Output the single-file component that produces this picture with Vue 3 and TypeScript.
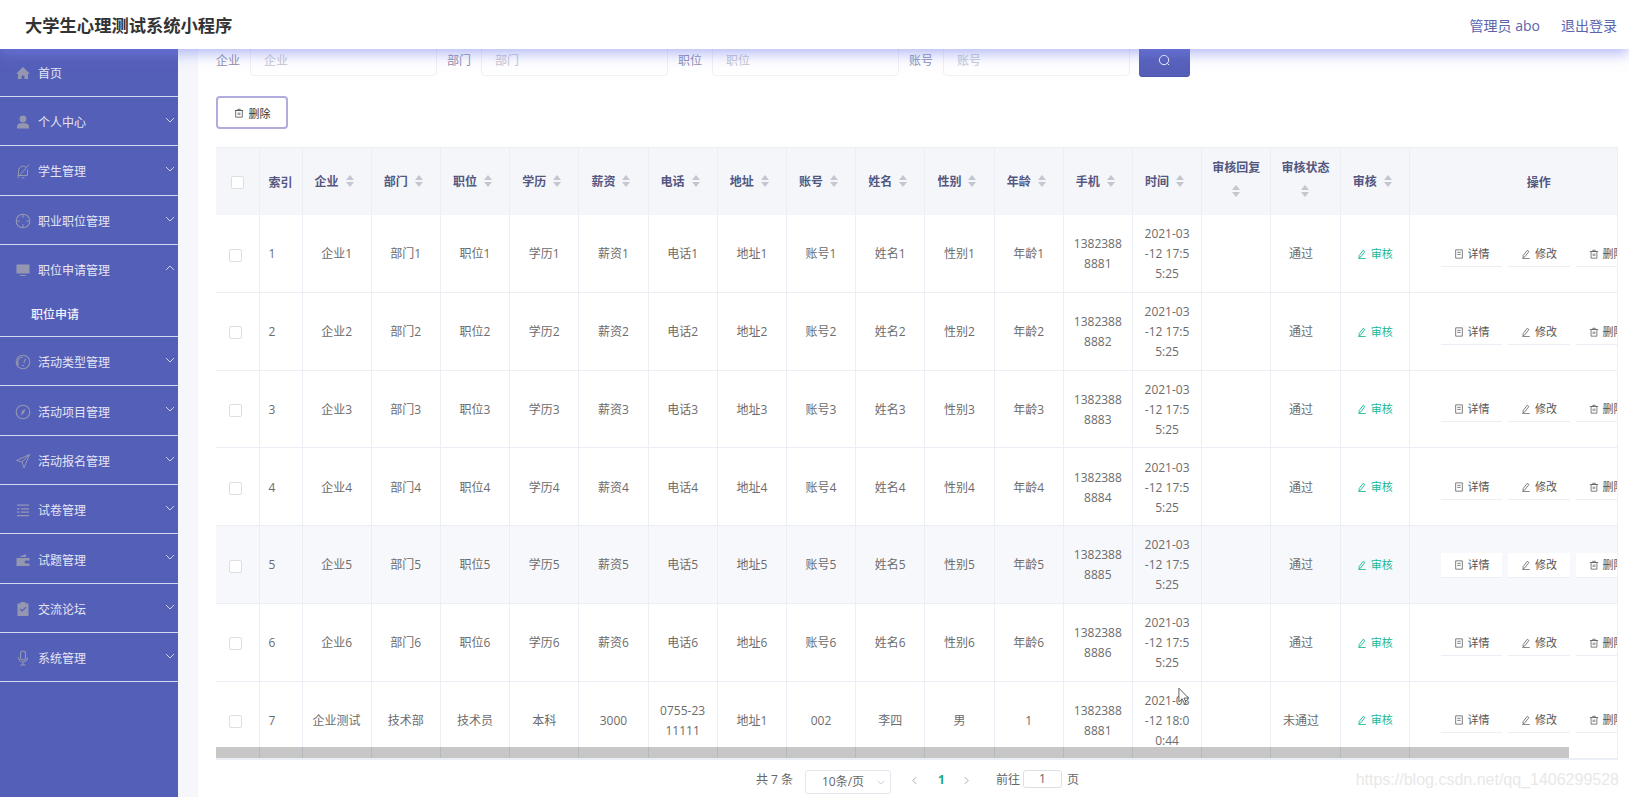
<script setup lang="ts">
interface MenuItem { name: string; icon: string; open?: boolean; sub?: string[] }
const menu: MenuItem[] = [
  { name: '首页', icon: 'home' },
  { name: '个人中心', icon: 'user' },
  { name: '学生管理', icon: 'bell' },
  { name: '职业职位管理', icon: 'aim' },
  { name: '职位申请管理', icon: 'monitor', open: true, sub: ['职位申请'] },
  { name: '活动类型管理', icon: 'odometer' },
  { name: '活动项目管理', icon: 'compass' },
  { name: '活动报名管理', icon: 'send' },
  { name: '试卷管理', icon: 'list' },
  { name: '试题管理', icon: 'wallet' },
  { name: '交流论坛', icon: 'claim' },
  { name: '系统管理', icon: 'mic' }
]
const headers: { t: string; two?: boolean }[] = [
  { t: '企业' }, { t: '部门' }, { t: '职位' }, { t: '学历' }, { t: '薪资' }, { t: '电话' }, { t: '地址' },
  { t: '账号' }, { t: '姓名' }, { t: '性别' }, { t: '年龄' }, { t: '手机' }, { t: '时间' },
  { t: '审核回复', two: true }, { t: '审核状态', two: true }, { t: '审核' }
]
const searchFields = ['企业', '部门', '职位', '账号']
interface Row { id: number; cells: string[][]; state: string; hover?: boolean }
const base = ['企业', '部门', '职位', '学历', '薪资', '电话', '地址', '账号', '姓名', '性别', '年龄']
const rows: Row[] = [1, 2, 3, 4, 5, 6].map((i) => ({
  id: i,
  hover: i === 5,
  state: '通过',
  cells: [...base.map((b) => [b + i]), ['1382388', '888' + i], ['2021-03', '-12 17:5', '5:25']]
}))
rows.push({
  id: 7,
  state: '未通过',
  cells: [['企业测试'], ['技术部'], ['技术员'], ['本科'], ['3000'], ['0755-23', '11111'], ['地址1'], ['002'], ['李四'], ['男'], ['1'], ['1382388', '8881'], ['2021-03', '-12 18:0', '0:44']]
})
const ops = [
  { t: '详情', icon: 'doc' },
  { t: '修改', icon: 'edit' },
  { t: '删除', icon: 'trash' }
]
</script>

<template>
  <div class="page">
    <header class="topbar">
      <div class="title">大学生心理测试系统小程序</div>
      <div class="user"><span>管理员 abo</span><span>退出登录</span></div>
    </header>
    <div class="body">
      <aside class="side">
        <div v-for="m in menu" :key="m.name" class="group">
          <div class="item">
            <svg class="mi" viewBox="0 0 16 16">
              <path v-if="m.icon === 'home'" fill="currentColor" d="M8 2 1.500 8.200 2.400 9 3 8.500V14h3.600v-3.600h2.800V14H13V8.500l.6.5.9-.8z" />
              <g v-else-if="m.icon === 'user'" fill="currentColor"><circle cx="8" cy="5" r="3.400" /><path d="M2 14.500v-1.800c0-2 1.800-3.400 3.600-3.400h4.800c1.800 0 3.600 1.400 3.600 3.400v1.800z" /></g>
              <g v-else-if="m.icon === 'bell'" fill="none" stroke="currentColor" stroke-width="1"><path d="M3.500 12.500V7.500a4.500 4.500 0 0 1 7.600-3.200M12.500 6.500v6H2.500M6.500 14.800h3M14 1.500 2.500 15" /></g>
              <g v-else-if="m.icon === 'aim'" fill="none" stroke="currentColor" stroke-width="1.100"><circle cx="8" cy="8" r="6.800" /><path d="M8 1.200v3.600M8 11.200v3.600M1.200 8h3.600M11.200 8h3.600" /></g>
              <path v-else-if="m.icon === 'monitor'" fill="currentColor" d="M1.500 2.500h13v9h-13zM5 13h6v1H5z" />
              <g v-else-if="m.icon === 'odometer'" fill="none" stroke="currentColor" stroke-width="1.100"><circle cx="8" cy="8" r="6.800" /><path d="M3.500 11A5 5 0 0 1 8 3.200M8.800 9 10.500 4.500M7 11.500h2" /></g>
              <g v-else-if="m.icon === 'compass'" fill="none" stroke="currentColor" stroke-width="1.100"><circle cx="8" cy="8" r="6.800" /><path d="M10.500 4.500 9 9 6 11.500 7 7z" fill="currentColor" stroke="none" /></g>
              <path v-else-if="m.icon === 'send'" fill="none" stroke="currentColor" stroke-width="1" d="M14.500 1.500 1.500 7.500l5.500 1.500 2 5.800zM7 9l7.500-7.500" />
              <path v-else-if="m.icon === 'list'" fill="currentColor" d="M2 2.500h12v1.300H2zM6 6.200h8v1.300H6zM2 6.200h2.500v1.300H2zM6 9.400h8v1.300H6zM2 9.400h2.500v1.300H2zM2 13h12v1.300H2z" />
              <path v-else-if="m.icon === 'wallet'" fill="currentColor" d="M1.500 6h13v2.500H11a1.500 1.500 0 0 0 0 3h3.500v2.500h-13zM4 5l6.500-2.800.8 2.800z" />
              <path v-else-if="m.icon === 'claim'" fill="currentColor" fill-rule="evenodd" d="M5.500 1h5v1.500h3v12.500h-11V2.500h3zM4.700 8.200l2.500 2.500 4.200-4.200-.8-.8-3.400 3.400-1.700-1.700z" />
              <g v-else fill="none" stroke="currentColor" stroke-width="1.100"><rect x="5.500" y="1" width="5" height="9" rx="2.500" /><path d="M3.500 7.500a4.500 4.500 0 0 0 9 0M8 12v3M5.500 15h5" /></g>
            </svg>
            <span class="mt">{{ m.name }}</span>
            <svg v-if="m.name !== '首页'" class="arrow" viewBox="0 0 10 6"><path fill="none" stroke="currentColor" stroke-width="1" :d="m.open ? 'M1 5l4-4 4 4' : 'M1 1l4 4 4-4'" /></svg>
          </div>
          <div v-for="s in m.sub" :key="s" class="subitem">{{ s }}</div>
        </div>
      </aside>
      <main class="main">
        <section class="panel">
          <form class="search" @submit.prevent>
            <label v-for="f in searchFields" :key="f" class="field">
              <span>{{ f }}</span>
              <input :placeholder="f" />
            </label>
            <button class="sbtn" type="button" aria-label="搜索">
              <svg viewBox="0 0 14 14" width="13" height="13"><circle cx="6.500" cy="6.500" r="5" fill="none" stroke="#fff" stroke-width="1" /><path d="M10 10l2 2" stroke="#fff" stroke-width="1" /></svg>
            </button>
          </form>
          <button class="del" type="button">
            <svg viewBox="0 0 12 12" width="10" height="10"><path fill="none" stroke="#555" stroke-width="1" d="M2 3h8v8H2zM1 3h10M4.500 3V1.500h3V3M5 5.500v3M7 5.500v3" /></svg>
            删除
          </button>
          <div class="tablewrap">
            <table class="grid">
              <colgroup>
                <col class="c0" /><col class="c1" />
                <col v-for="h in headers" :key="h.t" class="cn" />
                <col class="cop" />
              </colgroup>
              <thead>
                <tr>
                  <th><span class="check hc"></span></th>
                  <th>索引</th>
                  <th v-for="h in headers" :key="h.t">
                    <span :class="['hd', { two: h.two }]">
                      <span>{{ h.t }}</span>
                      <span class="sort"><i class="up"></i><i class="down"></i></span>
                    </span>
                  </th>
                  <th>操作</th>
                </tr>
              </thead>
              <tbody>
                <tr v-for="r in rows" :key="r.id" :class="{ hover: r.hover }">
                  <td><span class="check"></span></td>
                  <td class="idx">{{ r.id }}</td>
                  <td v-for="(c, ci) in r.cells" :key="ci"><div v-for="l in c" :key="l" class="ln">{{ l }}</div></td>
                  <td></td>
                  <td class="state">{{ r.state }}</td>
                  <td>
                    <span class="audit">
                      <svg viewBox="0 0 12 12" width="10" height="10"><path fill="none" stroke="currentColor" stroke-width="1.100" d="M7.500 1.500 9.500 3 4.500 9.500 2.500 10.500 2.500 8zM1.500 11.500h9" /></svg>
                      审核
                    </span>
                  </td>
                  <td class="opcell">
                    <div class="ops">
                      <span v-for="o in ops" :key="o.t" class="op">
                        <svg viewBox="0 0 12 12" width="10" height="10">
                          <path v-if="o.icon === 'doc'" fill="none" stroke="#666" stroke-width="1" d="M2 1h8v10H2zM4 4h4M4 6.500h4" />
                          <path v-else-if="o.icon === 'edit'" fill="none" stroke="#666" stroke-width="1" d="M7.500 1.500 9.500 3 4.500 9.500 2.500 10.500 2.500 8zM1.500 11.500h9" />
                          <path v-else fill="none" stroke="#666" stroke-width="1" d="M2.500 3h7v8h-7zM1 3h10M4.500 3V1.500h3V3M5 5.500v3M7 5.500v3" />
                        </svg>
                        {{ o.t }}
                      </span>
                    </div>
                  </td>
                </tr>
              </tbody>
            </table>
            <div class="thumb"></div>
          </div>
          <nav class="pager">
            <span class="total">共 7 条</span>
            <span class="size">10条/页<svg viewBox="0 0 10 6" width="8" height="5"><path fill="none" stroke="#c0c4cc" stroke-width="1" d="M1 1l4 4 4-4" /></svg></span>
            <svg class="pg pg1" viewBox="0 0 6 10" width="5" height="9"><path fill="none" stroke="#999" stroke-width="1" d="M5 1 1 5l4 4" /></svg>
            <b class="cur">1</b>
            <svg class="pg pg2" viewBox="0 0 6 10" width="5" height="9"><path fill="none" stroke="#999" stroke-width="1" d="M1 1l4 4-4 4" /></svg>
            <span class="goto">前往</span>
            <span class="jump">1</span>
            <span class="page-unit">页</span>
          </nav>
        </section>
      </main>
    </div>
    <div class="watermark">https://blog.csdn.net/qq_1406299528</div>
    <svg class="cursor" viewBox="0 0 12 19" width="11" height="18"><path fill="#fff" stroke="#555" stroke-width="1" d="M1 1v15l3.500-3.500 2.500 5.500 2-1-2.500-5.200h5z" /></svg>
  </div>
</template>

<style scoped>
.page {
  position: relative;
  width: 1629px;
  height: 797px;
  overflow: hidden;
  display: flex;
  flex-direction: column;
  font-family: "Open Sans", "Noto Sans CJK SC", sans-serif;
  font-size: 12px;
  color: #666;
  background: #f5f7fb;
}
.topbar {
  position: relative;
  z-index: 5;
  flex: none;
  height: 49px;
  box-sizing: border-box;
  padding: 0 12px 0 25px;
  display: flex;
  align-items: center;
  justify-content: space-between;
  background: #fff;
  box-shadow: 0 4px 14px rgba(120, 130, 240, 0.6);
}
.title {
  font-size: 17.3px;
  font-weight: 700;
  color: #333;
}
.user {
  display: flex;
  gap: 21px;
  font-size: 14px;
  color: #5c64ac;
}
.body {
  flex: 1;
  display: flex;
  min-height: 0;
}
.side {
  flex: none;
  width: 178px;
  background: #545fb8;
  color: #e4e5f4;
}
.item {
  position: relative;
  height: 48.3px;
  box-sizing: border-box;
  padding: 2px 0 0 15px;
  display: flex;
  align-items: center;
  gap: 7px;
}
.group {
  border-bottom: 1px solid #d5d8f2;
}
.group:first-child .item {
  height: 47px;
  padding-top: 0;
}
.mi {
  width: 16px;
  height: 16px;
  color: #9597b0;
  flex: none;
}
.arrow {
  position: absolute;
  right: 3px;
  top: 20px;
  width: 10px;
  height: 6px;
  color: #cfd0e4;
}
.subitem {
  height: 43px;
  line-height: 43px;
  padding-left: 31px;
  font-weight: 500;
  color: #f2f2fa;
}
.main {
  flex: 1;
  min-width: 0;
  padding-left: 20px;
  overflow: hidden;
}
.panel {
  display: flow-root;
  height: 100%;
  background: #fff;
  padding-left: 18px;
  padding-right: 11px;
}
.search {
  display: flex;
  margin-top: -5px;
  height: 33px;
}
.field {
  display: flex;
  align-items: center;
  gap: 10px;
  width: 221px;
  margin-right: 10px;
  height: 32px;
  color: #8d90ad;
}
.field input {
  width: 187px;
  height: 32px;
  box-sizing: border-box;
  border: 1px solid #f0f0f5;
  border-radius: 4px;
  padding: 0 13px;
  background: #fff;
  font: inherit;
  outline: none;
}
.field input::placeholder {
  color: #c4c7d0;
}
.sbtn {
  width: 51px;
  height: 33px;
  border: 0;
  border-radius: 4px;
  padding: 0;
  background: #5660b9;
  box-shadow: inset 0 -1px 0 #4a54a8;
  margin-left: -1px;
  display: flex;
  align-items: center;
  justify-content: center;
}
.del {
  display: flex;
  align-items: center;
  justify-content: center;
  gap: 5px;
  width: 72px;
  height: 33px;
  margin-top: 19px;
  border: 2px solid #b0acdd;
  border-radius: 4px;
  background: #fff;
  font: inherit;
  font-size: 11px;
  color: #333;
}
.tablewrap {
  position: relative;
  margin-top: 18px;
  width: 1402px;
  height: 613px;
  box-sizing: border-box;
  border: 1px solid #ebeef5;
  border-left: 0;
  overflow: hidden;
}
.grid {
  table-layout: fixed;
  border-collapse: separate;
  border-spacing: 0;
  width: 1453px;
}
.c0 { width: 43.5px; }
.c1 { width: 43px; }
.cn { width: 69.2px; }
.cop { width: 259px; }
th {
  height: 67px;
  padding: 0;
  background: #f5f6fa;
  border-right: 1px solid #ebeef5;
  border-bottom: 0;
  color: #54577f;
  font-size: 12px;
  font-weight: 700;
  text-align: center;
  box-sizing: border-box;
}
td {
  height: 77.75px;
  padding: 2px 0 0;
  border-right: 1px solid #ebeef5;
  border-bottom: 1px solid #ebeef5;
  text-align: center;
  box-sizing: border-box;
  line-height: 20px;
  color: #6c6c6c;
}
tr.hover td {
  background: #f7f8fb;
}
.ln {
  white-space: nowrap;
}
.idx {
  text-align: left;
  padding-left: 9px;
}
.state {
  padding-right: 9px;
}
.check {
  display: inline-block;
  box-sizing: border-box;
  width: 13px;
  height: 13px;
  border: 1px solid #dcdfe6;
  border-radius: 2px;
  background: #fff;
  vertical-align: middle;
  margin-right: 3px;
}
.hc {
  margin-right: 0;
  margin-left: 1px;
}
.hd {
  display: inline-flex;
  align-items: center;
  gap: 7px;
  vertical-align: middle;
  margin: 0 5px 2px 0;
}
.hd.two {
  flex-direction: column;
  gap: 9px;
  margin: 0 0 8px;
}
.sort {
  display: inline-flex;
  flex-direction: column;
  gap: 2px;
}
.sort i {
  width: 0;
  height: 0;
  border-left: 4.500px solid transparent;
  border-right: 4.500px solid transparent;
}
.sort .up { border-bottom: 5px solid #c4c7d0; }
.sort .down { border-top: 5px solid #c4c7d0; }
.audit {
  display: inline-flex;
  align-items: center;
  gap: 4px;
  font-size: 11px;
  color: #17b893;
}
.opcell {
  border-right: 0;
  text-align: left;
}
.ops {
  display: flex;
  gap: 6px;
  padding-left: 31px;
  width: 258px;
  box-sizing: border-box;
}
.op {
  flex: none;
  width: 61.500px;
  height: 25px;
  box-sizing: border-box;
  display: flex;
  align-items: center;
  justify-content: center;
  gap: 4px;
  font-size: 11px;
  color: #555;
  background: #fff;
  border-bottom: 1px solid #ebeef5;
}
.thumb {
  position: absolute;
  left: 0;
  bottom: 1px;
  width: 1353px;
  height: 11px;
  background: rgba(0, 0, 0, 0.22);
}
.pager {
  position: relative;
  display: flex;
  align-items: flex-start;
  margin-top: 10px;
  padding-left: 540px;
  height: 24px;
  line-height: 18px;
  color: #666;
}
.total {
  width: 49px;
  line-height: 20px;
}
.size {
  width: 86px;
  height: 24px;
  box-sizing: border-box;
  border: 1px solid #e4e7ed;
  border-radius: 3px;
  padding-left: 16px;
  display: flex;
  align-items: center;
  justify-content: space-between;
  padding-right: 5px;
}
.pg {
  margin-top: 6px;
}
.pg1 { margin-left: 21px; }
.cur {
  margin-left: 21px;
  width: 6px;
  color: #14a98a;
  line-height: 20px;
}
.pg2 { margin-left: 20px; }
.goto {
  margin-left: 27px;
  line-height: 20px;
}
.jump {
  margin-left: 3px;
  width: 39px;
  height: 18px;
  box-sizing: border-box;
  border: 1px solid #dcdfe6;
  border-radius: 3px;
  text-align: center;
  line-height: 16px;
}
.page-unit {
  margin-left: 5px;
  line-height: 20px;
}
.watermark {
  position: absolute;
  right: 10px;
  top: 771px;
  font-family: "Liberation Sans", sans-serif;
  font-size: 16px;
  color: #e8e8e8;
  white-space: nowrap;
}
.cursor {
  position: absolute;
  left: 1178px;
  top: 687px;
}
</style>

<style>
html, body { margin: 0; background: #fff; overflow: hidden; }
</style>
